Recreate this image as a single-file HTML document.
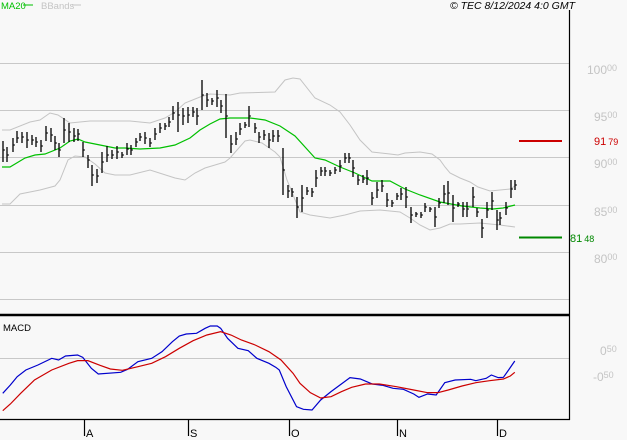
<!DOCTYPE html>
<html><head><meta charset="utf-8"><style>
html,body{margin:0;padding:0;background:#f8f8f8;}
svg{display:block;font-family:"Liberation Sans",sans-serif;}
</style></head><body>
<svg width="627" height="440" viewBox="0 0 627 440" xmlns="http://www.w3.org/2000/svg">
<rect width="627" height="440" fill="#f8f8f8"/>
<g stroke="#c8c8c8" stroke-width="1">
<line x1="0" y1="63.5" x2="569" y2="63.5"/>
<line x1="0" y1="110.5" x2="569" y2="110.5"/>
<line x1="0" y1="157.5" x2="569" y2="157.5"/>
<line x1="0" y1="205.5" x2="569" y2="205.5"/>
<line x1="0" y1="252.5" x2="569" y2="252.5"/>
<line x1="0" y1="299.5" x2="569" y2="299.5"/>
<line x1="0" y1="358.5" x2="569" y2="358.5"/>
</g>
<g fill="none" stroke="#c4c4c4" stroke-width="1">
<polyline points="2,130 10,130 30,122 40,120 50,113 58,115 70,123 90,121 130,121 150,123 165,118 175,112 185,103 200,97 210,94 230,95 240,93 275,92 285,80 293,78 300,79 315,98 330,105 340,112 350,125 360,140 372,152 390,154 398,155 405,153 420,152 432,154 440,160 445,167 450,173 460,178 470,182 478,187 490,191 510,189 515,186"/>
<polyline points="2,204 10,204 20,194 40,190 55,186 60,180 68,160 75,156 85,157 95,164 105,173 115,175 130,175 150,170 175,178 185,180 195,173 205,168 215,165 225,162 230,158 245,141 250,140 262,143 275,152 280,157 287,180 300,212 310,215 330,218 345,215 360,211 380,210 400,212 410,218 420,225 430,230 440,228 450,224 460,224 480,223 500,225 515,227"/>
</g>
<polyline fill="none" stroke="#00c000" stroke-width="1.2" points="2,167 10,167 25,158 35,155 45,154 60,148 70,141 78,139 85,142 100,145 115,148 125,148 140,149 160,148 175,145 190,138 200,130 210,124 220,119 230,118 250,118 265,120 280,126 295,136 315,158 325,160 340,167 355,173 372,181 390,181 405,189 420,195 440,202 462,206 480,208 493,209 503,208 515,205"/>
<g stroke="#000" stroke-width="1.2">
<line x1="569.5" y1="10" x2="569.5" y2="420"/>
<line x1="0" y1="315" x2="569" y2="315" stroke-width="2.4"/>
<line x1="0" y1="419.5" x2="570" y2="419.5"/>
<line x1="84.5" y1="419" x2="84.5" y2="436"/>
<line x1="188.5" y1="419" x2="188.5" y2="436"/>
<line x1="289.5" y1="419" x2="289.5" y2="436"/>
<line x1="397.5" y1="419" x2="397.5" y2="436"/>
<line x1="497.5" y1="419" x2="497.5" y2="436"/>
</g>
<g font-size="11" fill="#000">
<text x="86" y="437">A</text>
<text x="190" y="437">S</text>
<text x="291" y="437">O</text>
<text x="399" y="437">N</text>
<text x="499" y="437">D</text>
</g>
<line x1="519" y1="141" x2="562" y2="141" stroke="#cc0000" stroke-width="2"/>
<line x1="519" y1="237.5" x2="562" y2="237.5" stroke="#008800" stroke-width="2"/>
<g font-size="11">
<text x="594" y="145" fill="#cc0000">91<tspan font-size="9" dx="2">79</tspan></text>
<text x="570" y="242" fill="#008800">81<tspan font-size="9" dx="2">48</tspan></text>
</g>
<g font-size="12" fill="#c4c4c4">
<text x="587" y="74">100<tspan font-size="9" dy="-3">00</tspan></text>
<text x="594" y="121">95<tspan font-size="9" dy="-3">00</tspan></text>
<text x="594" y="168">90<tspan font-size="9" dy="-3">00</tspan></text>
<text x="594" y="216">85<tspan font-size="9" dy="-3">00</tspan></text>
<text x="594" y="263">80<tspan font-size="9" dy="-3">00</tspan></text>
<text x="600" y="355">0<tspan font-size="9" dy="-3">50</tspan></text>
<text x="593" y="381">-0<tspan font-size="9" dy="-3">50</tspan></text>
</g>
<text x="1" y="9" font-size="9.5" fill="#00c000">MA20</text>
<line x1="23" y1="5" x2="33" y2="5" stroke="#00c000" stroke-width="1"/>
<text x="41" y="9" font-size="9.5" fill="#c4c4c4">BBands</text>
<line x1="72" y1="5" x2="81" y2="5" stroke="#c4c4c4" stroke-width="1"/>
<text x="575" y="9" font-size="10.5" font-style="italic" fill="#000" text-anchor="end">© TEC 8/12/2024 4:0 GMT</text>
<text x="3" y="331" font-size="9.5" fill="#000">MACD</text>
<g transform="translate(0,310) scale(0.3448,0.3333)" fill="none">
<polyline vector-effect="non-scaling-stroke" stroke="#0000cc" stroke-width="1.2" points="8,250 30,225 50,200 75,180 110,165 150,145 170,150 190,138 225,135 240,142 265,175 285,192 350,187 370,178 400,155 440,145 470,125 500,95 520,78 540,72 570,70 595,55 610,48 630,48 640,55 660,85 690,115 720,122 745,145 780,160 800,172 810,180 830,230 860,290 880,298 905,300 930,270 960,245 990,222 1015,203 1045,207 1080,222 1110,226 1140,235 1170,238 1200,252 1215,262 1240,252 1265,255 1290,218 1320,210 1365,208 1380,212 1410,205 1425,195 1445,203 1460,202 1475,180 1493,153"/>
<polyline vector-effect="non-scaling-stroke" stroke="#cc0000" stroke-width="1.2" points="8,302 30,282 60,250 100,210 150,180 200,160 225,152 255,152 290,166 320,177 355,181 400,170 440,160 480,140 520,115 560,92 600,75 640,65 670,75 700,90 740,105 780,125 815,150 850,190 870,220 900,248 930,264 960,260 990,245 1020,232 1060,222 1100,222 1150,230 1200,240 1240,248 1270,248 1300,240 1340,228 1380,218 1420,212 1460,207 1480,198 1493,187"/>
</g>
<g stroke="#000" stroke-width="1.3">
<path d="M3,141V162M7,147V162M13,138V152M17,131V143M22,132V143M27,132V148M32,135V145M36,137V147M41,140V152M46,126V141M51,128V142M55,136V150M59,143V157M64,118V143M69,123V142M74,128V142M78,129V141M83,142V157M88,155V168M92,165V186M97,169V183M102,152V173M107,146V162M112,150V159M117,146V159M122,152V158M127,143V155M131,145V155M136,138V147M140,133V141M145,132V144M150,138V147M155,128V140M160,123V133M165,123V130M169,117V127M173,106V120M178,102V132M183,108V125M188,107V123M193,107V117M197,108V125M202,80V110M207,93V107M212,98V105M217,90V107M221,100V113M226,94V138M231,135V153M236,132V145M240,123V135M245,122V128M249,106V127M255,123V133M259,132V143M264,130V140M269,133V148M273,130V142M278,130V142M283,148V195M288,185V198M292,188V197M297,197V218M302,185V212M307,187V195M312,188V197M316,170V187M321,167V176M325,167V176M330,170V176M335,167V174M340,160V172M345,153V163M349,153V163M353,160V177M358,175V185M363,175V183M367,170V185M372,192V205M377,182V198M382,180V192M387,193V207M392,200V207M397,193V200M401,188V200M406,187V208M411,207V223M416,212V217M421,212V218M425,203V212M430,207V212M435,207V227M439,198V208M444,185V203M448,181V205M453,195V222M458,202V207M463,202V217M467,202V217M473,187V207M477,208V217M482,219V238M487,202V218M492,192V210M497,210V230M500,212V225M506,202V215M511,180V198M515,180V190"/>
<path stroke-width="1" d="M3,150h2M7,155h2M13,145h2M17,138h2M22,137h2M27,140h2M32,140h2M36,142h2M41,146h2M46,133h2M51,135h2M55,143h2M59,150h2M64,130h2M69,132h2M74,136h2M78,134h2M83,150h2M88,160h2M92,175h2M97,176h2M102,162h2M107,155h2M112,155h2M117,152h2M122,155h2M127,149h2M131,150h2M136,142h2M140,137h2M145,138h2M150,143h2M155,134h2M160,128h2M165,126h2M169,122h2M173,113h2M178,115h2M183,116h2M188,115h2M193,112h2M197,116h2M202,95h2M207,100h2M212,101h2M217,98h2M221,106h2M226,116h2M231,144h2M236,139h2M240,129h2M245,125h2M249,116h2M255,128h2M259,137h2M264,135h2M269,140h2M273,136h2M278,136h2M283,170h2M288,191h2M292,192h2M297,207h2M302,198h2M307,191h2M312,192h2M316,178h2M321,171h2M325,171h2M330,173h2M335,170h2M340,166h2M345,158h2M349,158h2M353,168h2M358,180h2M363,179h2M367,178h2M372,198h2M377,190h2M382,186h2M387,200h2M392,203h2M397,196h2M401,194h2M406,197h2M411,215h2M416,214h2M421,215h2M425,207h2M430,209h2M435,217h2M439,203h2M444,194h2M448,193h2M453,208h2M458,204h2M463,209h2M467,209h2M473,197h2M477,212h2M482,228h2M487,210h2M492,201h2M497,220h2M500,218h2M506,208h2M511,189h2M515,185h2"/>
</g>
</svg>
</body></html>
